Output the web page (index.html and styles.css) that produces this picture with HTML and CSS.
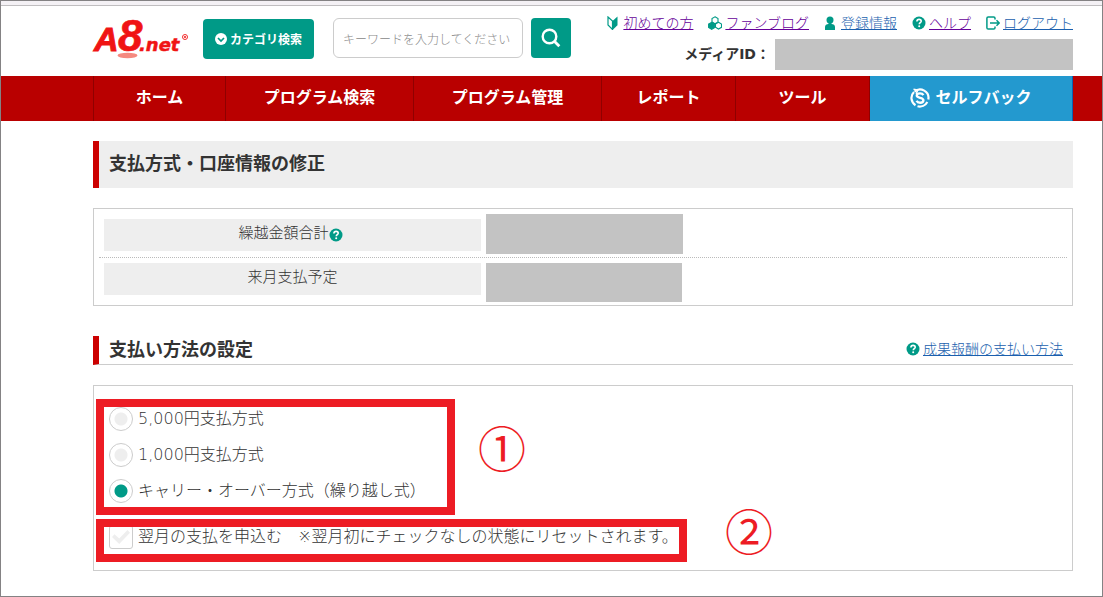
FILE: index.html
```
<!DOCTYPE html>
<html lang="ja">
<head>
<meta charset="utf-8">
<title>支払方式・口座情報の修正 | A8.net</title>
<link rel="stylesheet" href="styles.css">
</head>
<body>
<svg class="defs" aria-hidden="true">
  <symbol id="i-help" viewBox="0 0 14 14"><circle cx="7" cy="7" r="6.5" fill="#009a87"/><path d="M4.9 5.5c0-1.4 1-2.1 2.2-2.1s2.1.7 2.1 1.8c0 1.5-1.9 1.5-1.9 3" fill="none" stroke="#fff" stroke-width="1.6"/><circle cx="7.2" cy="10.2" r="1" fill="#fff"/></symbol>
</svg>
<div class="page">
  <div class="strip"></div>
  <header class="header">
    <div class="tools">
      <a class="logo" href="#" aria-label="A8.net">
        <svg width="96" height="42" viewBox="0 0 96 42">
          <ellipse cx="34.500" cy="37.500" rx="10" ry="2.700" fill="#f58a80"/>
          <g fill="#f01414" stroke="#f01414">
            <text class="logo-a" x="1" y="33" stroke-width="1">A</text>
            <text class="logo-8" x="25" y="33" stroke-width=".600">8</text>
            <text class="logo-net" x="46" y="33" stroke-width=".500">.net</text>
          </g>
          <circle cx="92" cy="19" r="2.500" fill="none" stroke="#f01414" stroke-width=".900"/>
          <circle cx="92" cy="19" r="1" fill="#f01414"/>
        </svg>
      </a>
      <button class="btn category" type="button">
        <svg width="12" height="12" viewBox="0 0 12 12"><circle cx="6" cy="6" r="6" fill="#fff"/><path d="M3 5l3 3 3-3" fill="none" stroke="#009a87" stroke-width="1.700"/></svg>
        カテゴリ検索
      </button>
      <form class="search">
        <input type="text" placeholder="キーワードを入力してください" aria-label="キーワード">
        <button class="btn find" type="button" aria-label="検索">
          <svg width="20" height="20" viewBox="0 0 20 20" fill="none" stroke="#fff" stroke-width="2.400"><circle cx="8.500" cy="8.500" r="6.800"/><path d="M13.300 13.300l5 5" stroke-width="2.800"/></svg>
        </button>
      </form>
    </div>
    <div class="account">
      <ul class="links">
        <li><svg width="14" height="14" viewBox="0 0 14 14"><path d="M2 1l4.500 4v8.500L2 9z" fill="#fff" stroke="#009a87" stroke-width="1.200"/><path d="M11.500 .5v8.800L6.500 14V5z" fill="#009a87"/></svg><a class="visited" href="#">初めての方</a></li>
        <li><svg width="14" height="14" viewBox="0 0 14 14" fill="#fff" stroke="#009a87" stroke-width="1.100"><path d="M7 .8l3 1.700v3.600L7 7.800 4 6.100V2.500z"/><path d="M10.500 6.300l3 1.700v3.300l-3 1.700-3-1.700V8z"/><path d="M3.700 6.300l3.200 1.700v3.500l-3.200 1.800L.6 11.500V8z" fill="#009a87"/></svg><a class="visited" href="#">ファンブログ</a></li>
        <li><svg width="14" height="14" viewBox="0 0 14 14" fill="#009a87"><circle cx="6" cy="4" r="3.500"/><path d="M4.500 6h3v2C9.500 8 11 9 11 11v3H1v-3c0-2 1.500-3 3.500-3z"/></svg><a href="#">登録情報</a></li>
        <li><svg width="14" height="14"><use href="#i-help"/></svg><a class="visited" href="#">ヘルプ</a></li>
        <li><svg width="14" height="14" viewBox="0 0 14 14" fill="none" stroke="#009a87" stroke-width="1.500"><path d="M9 3.500V2.200Q9 .9 7.700.9H2.200Q.9.900.9 2.200v9.600q0 1.300 1.300 1.300h5.500q1.300 0 1.300-1.300v-1.300M4 7h9M10.500 4.200L13.300 7l-2.800 2.800"/></svg><a href="#">ログアウト</a></li>
      </ul>
      <div class="media"><span>メディアID：</span><span class="mask media-mask"></span></div>
    </div>
  </header>
  <nav class="nav">
    <a href="#">ホーム</a>
    <a href="#">プログラム検索</a>
    <a href="#">プログラム管理</a>
    <a href="#">レポート</a>
    <a href="#">ツール</a>
    <a class="selfback" href="#">
      <svg width="20" height="20" viewBox="0 0 20 20" fill="none" stroke="#fff" stroke-width="2.200"><path d="M4 4A8.400 8.400 0 0 0 5.500 17.200M7.500 18.200A8.400 8.400 0 0 0 17.300 14M18.300 11.500A8.400 8.400 0 0 0 4.500 3.600"/><path d="M3.500 1.200l4.200.8-1.500 4" stroke-width="1.500"/><path d="M13.400 7.200C12.600 5.800 11.400 5.400 10 5.400c-1.900 0-3.200.8-3.200 2.200 0 3 6.600 1.600 6.600 4.700 0 1.500-1.500 2.400-3.300 2.400-1.600 0-2.900-.6-3.500-1.900" stroke-width="2.400"/></svg>
      セルフバック
    </a>
  </nav>
  <main class="content">
    <h1>支払方式・口座情報の修正</h1>
    <table class="summary">
      <tr>
        <th scope="row"><div class="label">繰越金額合計<svg width="14" height="14"><use href="#i-help"/></svg></div></th>
        <td><div class="mask"></div></td>
      </tr>
      <tr>
        <th scope="row"><div class="label">来月支払予定</div></th>
        <td><div class="mask"></div></td>
      </tr>
    </table>
    <div class="section-head">
      <h2>支払い方法の設定</h2>
      <div class="more"><svg width="14" height="14"><use href="#i-help"/></svg><a href="#">成果報酬の支払い方法</a></div>
    </div>
    <form class="options">
      <label><input type="radio" name="method">5,000円支払方式</label>
      <label><input type="radio" name="method">1,000円支払方式</label>
      <label><input type="radio" name="method" checked>キャリー・オーバー方式（繰り越し式）</label>
      <label class="apply"><input type="checkbox"><span>翌月の支払を申込む　※翌月初にチェックなしの状態にリセットされます。</span></label>
      <div class="frame frame-method"></div>
      <div class="frame frame-apply"></div>
      <span class="mark mark-1">①</span>
      <span class="mark mark-2">②</span>
    </form>
  </main>
</div>
</body>
</html>
```
FILE: styles.css
```
* { box-sizing: border-box; }

body {
  margin: 0;
  color: #333;
  background: #fff;
  font: 300 16px/24px "DejaVu Sans", "Noto Sans CJK JP", sans-serif;
}

svg { flex: none; display: block; }
.defs { position: absolute; width: 0; height: 0; }
a { color: #1a5fae; }
a.visited { color: #609; }
.mask { background: #c3c3c3; }

.page {
  min-height: 100vh;
  border: 1px solid #848284;
}

.strip {
  height: 5px;
  background: #f4f1f5;
  border-bottom: 1px solid #c0bec0;
}

/* header */
.header {
  display: flex;
  justify-content: space-between;
  padding: 8px 29px 6px 92px;
}

.tools {
  display: flex;
  align-items: flex-start;
  padding-top: 4px;
}

.logo { margin-right: 14px; }
.logo svg { overflow: visible; }
.logo-a { font: italic bold 34px "Liberation Sans", sans-serif; }
.logo-8 { font: italic bold 44px "Liberation Sans", sans-serif; }
.logo-net { font: italic bold 18px "DejaVu Sans", sans-serif; }

.btn {
  display: flex;
  align-items: center;
  justify-content: center;
  height: 40px;
  padding: 0;
  border: 0;
  border-radius: 4px;
  background: #009a87;
  color: #fff;
}

.category {
  gap: 3px;
  width: 111px;
  margin: 1px 19px 0 0;
  font: bold 12px/20px "Noto Sans CJK JP", sans-serif;
}

.search {
  display: flex;
  gap: 8px;
}

.search input {
  width: 190px;
  height: 40px;
  padding: 0 9px;
  border: 1px solid #ccc;
  border-radius: 6px;
  font: 300 12px/20px "Noto Sans CJK JP", sans-serif;
}

.search input::placeholder { color: #888; }
.find { width: 40px; }

.links {
  display: flex;
  gap: 15px;
  margin: 0;
  padding: 0;
  list-style: none;
  font-size: 14px;
  line-height: 18px;
}

.links li,
.more {
  display: flex;
  align-items: center;
  gap: 3px;
}

.media {
  display: flex;
  align-items: center;
  justify-content: flex-end;
  margin-top: 7px;
  font-size: 14px;
  font-weight: bold;
  line-height: 31px;
}

.media-mask {
  width: 298px;
  height: 31px;
  margin-left: 5px;
}

/* navigation */
.nav {
  display: grid;
  grid-template-columns: 132fr 188fr 188fr 134fr 134fr 204fr;
  padding: 0 29px 0 92px;
  background: #b90000;
}

.nav a {
  display: flex;
  justify-content: center;
  gap: 5px;
  height: 45px;
  padding-top: 10px;
  border-left: 1px solid #8f0000;
  color: #fff;
  font-weight: bold;
  text-decoration: none;
}

.nav svg { margin-top: 2px; }

.nav .selfback {
  border-right: 1px solid #0b62b4;
  background: #2399cf;
}

/* content */
.content { padding: 20px 29px 25px 92px; }

h1,
h2 {
  margin: 0;
  font-size: 18px;
  line-height: 28px;
}

h1 {
  padding: 9px 10px 10px;
  border-left: 6px solid #c00;
  background: #eee;
}

.summary {
  display: block;
  margin-top: 20px;
  padding: 0 5px;
  border: 1px solid #ccc;
  border-spacing: 0;
}

.summary tbody { display: block; }
.summary tr { display: flex; }
.summary tr + tr { border-top: 1px dotted #bbb; }

.summary th {
  width: 40%;
  padding: 5px 5px 0;
  font-weight: 300;
}

.summary td { padding: 5px 0 3px; }
.summary tr:first-child th { padding-top: 10px; }
.summary .mask { width: 197px; height: 40px; }
.summary tr + tr .mask { width: 196px; height: 39px; }

.label {
  display: flex;
  align-items: center;
  justify-content: center;
  padding-bottom: 3px;
  background: #eee;
  font-size: 15px;
  line-height: 29px;
}

.label svg { margin: 3px 4px 0 0; }

.section-head {
  display: flex;
  justify-content: space-between;
  margin-top: 30px;
  padding: 0 10px;
  border-left: 6px solid #c00;
  border-bottom: 1px solid #ccc;
}

.more {
  padding-bottom: 2px;
  font-size: 14px;
  line-height: 20px;
}

.options {
  position: relative;
  display: flex;
  flex-direction: column;
  align-items: flex-start;
  gap: 12px;
  margin-top: 20px;
  padding: 21px 15px;
  border: 1px solid #ccc;
}

.options label {
  display: flex;
  align-items: center;
  gap: 5px;
}

.options .apply { margin-top: 10px; }

.options input {
  flex: none;
  appearance: none;
  width: 24px;
  height: 24px;
  margin: 0;
  border: 1px solid #ccc;
  border-radius: 50%;
  background: radial-gradient(circle, #eee 6px, #fff 7px);
}

.options input:checked { background: radial-gradient(circle, #009a87 6px, #fff 7px); }

.options input[type="checkbox"] {
  display: grid;
  place-items: center;
  border-radius: 3px;
  background: #fff;
}

.options input[type="checkbox"]::before {
  content: "";
  width: 18px;
  height: 14px;
  background: #eee;
  clip-path: polygon(0 50%, 14% 30%, 40% 60%, 86% 0, 100% 20%, 40% 100%);
}

/* annotations laid over the form */
.frame {
  position: absolute;
  left: 2px;
  border: 8px solid #ed1c24;
  pointer-events: none;
}

.frame-method { top: 13px; width: 359px; height: 116px; }
.frame-apply { top: 133px; width: 591px; height: 43px; }

.mark {
  position: absolute;
  color: #ed1c24;
  font: 48px/48px "Noto Sans CJK JP", sans-serif;
}

.mark-1 { left: 384px; top: 36px; }
.mark-2 { left: 631px; top: 119px; }
```
